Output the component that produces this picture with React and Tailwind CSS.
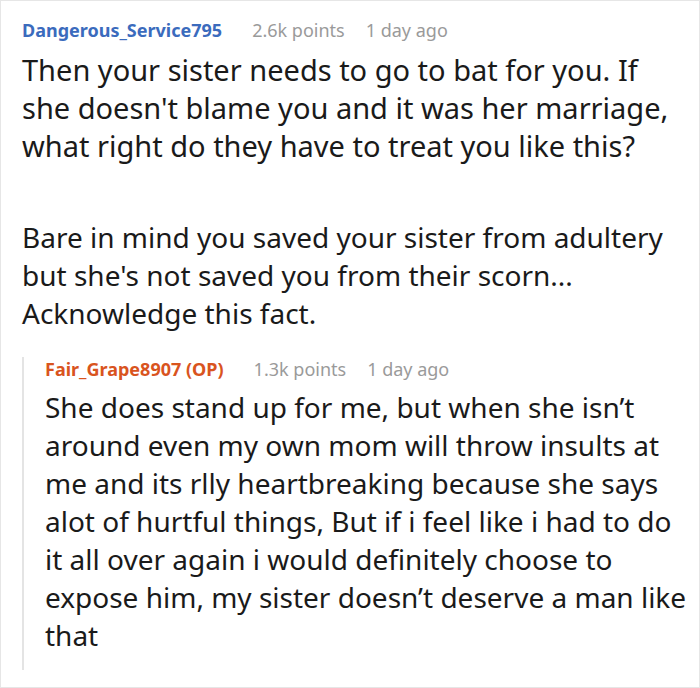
import React from 'react';

function Meta({ name, color, points, time }) {
  return (
    <div className="flex items-center text-[18px] leading-[24px]">
      <span className={`font-bold ${color}`}>{name}</span>
      <span className="ml-[30px] text-[#9a9a9a]">{points}</span>
      <span className="ml-[21px] text-[#9a9a9a]">{time}</span>
    </div>
  );
}

function App() {
  return (
    <div
      className="w-[700px] h-[688px] border border-[#e6e6e6] bg-white pt-[17px] pl-[21px] pr-[6px] overflow-hidden"
      style={{ fontFamily: '"Noto Sans", "Open Sans", sans-serif' }}
    >
      <Meta name="Dangerous_Service795" color="text-[#3b6bbd]" points="2.6k points" time="1 day ago" />
      <div className="mt-[9px] leading-[38px] text-[#1a1a1a]">
        <p className="text-[29px]">Then your sister needs to go to bat for you. If she doesn't blame you and it was her marriage, what right do they have to treat you like this?</p>
        <p className="mt-[53px] text-[28px]">Bare in mind you saved your sister from adultery but she's not saved you from their scorn... Acknowledge this fact.</p>
      </div>

      <div className="mt-[25px] border-l-2 border-[#e4e4e4] pl-[21px] pb-[16px]">
        <Meta name="Fair_Grape8907 (OP)" color="text-[#d9541e]" points="1.3k points" time="1 day ago" />
        <p className="mt-[7px] text-[28px] leading-[38px] text-[#1a1a1a]">
          She does stand up for me, but when she isn’t around even my own mom will throw insults at me and its rlly heartbreaking because she says alot of hurtful things, But if i feel like i had to do it all over again i would definitely choose to expose him, my sister doesn’t deserve a man like that
        </p>
      </div>
    </div>
  );
}

export default App;
